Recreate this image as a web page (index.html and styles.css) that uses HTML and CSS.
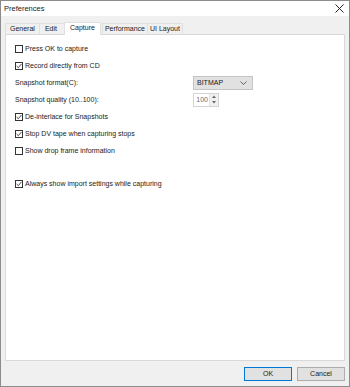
FILE: index.html
```html
<!DOCTYPE html>
<html lang="en">
<head>
    <meta charset="UTF-8">
    <title>Preferences</title>
    <link rel="stylesheet" href="styles.css">
</head>
<body>
    <div class="window">
        <div class="titlebar">
            <span class="title">Preferences</span>
            <svg class="close" width="9" height="9" viewBox="0 0 9 9">
                <path d="M0.5 0.5 L8.5 8.5 M8.5 0.5 L0.5 8.5" stroke="#222" stroke-width="1"/>
            </svg>
        </div>

        <div class="tabs">
            <span class="tab">General</span>
            <span class="tab wide">Edit</span>
            <span class="tab active">Capture</span>
            <span class="tab narrow">Performance</span>
            <span class="tab narrow">UI Layout</span>
        </div>

        <div class="panel">
            <label class="row"><span class="box"></span>Press OK to capture</label>
            <label class="row"><span class="box checked"></span>Record directly from CD</label>
            <div class="row">
                <span class="label">Snapshot format(C):</span>
                <span class="select">BITMAP
                    <svg width="7" height="4" viewBox="0 0 7 4"><path d="M0.5 0.5 L3.5 3.5 L6.5 0.5" fill="none" stroke="#555" stroke-width="0.9"/></svg>
                </span>
            </div>
            <div class="row">
                <span class="label">Snapshot quality (10..100):</span>
                <span class="spin">
                    <span class="spin-value">100</span>
                    <span class="spin-arrows">
                        <svg width="4" height="3" viewBox="0 0 4 3"><path d="M0 3 L2 0.5 L4 3 Z" fill="#666"/></svg>
                        <svg width="4" height="3" viewBox="0 0 4 3"><path d="M0 0 L2 2.5 L4 0 Z" fill="#666"/></svg>
                    </span>
                </span>
            </div>
            <label class="row"><span class="box checked"></span>De-interlace for Snapshots</label>
            <label class="row"><span class="box checked"></span>Stop DV tape when capturing stops</label>
            <label class="row"><span class="box"></span>Show drop frame information</label>
            <div class="row spacer"></div>
            <label class="row"><span class="box checked"></span>Always show import settings while capturing</label>
        </div>

        <div class="footer">
            <button class="btn default">OK</button>
            <button class="btn">Cancel</button>
        </div>
    </div>
</body>
</html>
```

FILE: styles.css
```css
body {
    margin: 0;
    font-family: "Liberation Sans", Arial, sans-serif;
    font-size: 7px;
    color: #1a1a1a;
}
.window {
    width: 350px;
    height: 387px;
    box-sizing: border-box;
    border: 1px solid #8c8c8c;
    background: #f0f0f0;
    display: flex;
    flex-direction: column;
}
.titlebar {
    height: 15px;
    background: #fff;
    display: flex;
    align-items: center;
    justify-content: space-between;
    padding: 0 5px 0 3px;
}
.title {
    font-size: 7.5px;
}
.tabs {
    display: flex;
    align-items: flex-end;
    height: 18px;
    margin: 0 4px;
}
.tab {
    height: 10px;
    line-height: 10px;
    padding: 0 4px;
    border: 1px solid #e0e0e0;
    border-bottom: none;
    margin-right: -1px;
    background: #f0f0f0;
}
.tab.wide {
    padding: 0 9px 0 5px;
}
.tab.narrow {
    padding: 0 2px;
}
.tab.active {
    height: 12px;
    line-height: 10px;
    background: #fff;
    margin: 0 1px -1px -2px;
    padding: 0 5px;
    position: relative;
    z-index: 1;
}
.panel {
    flex: 1;
    margin: 0 4px;
    background: #fff;
    border: 1px solid #d9d9d9;
    padding: 5px 0 0 9px;
}
.row {
    display: flex;
    align-items: center;
    height: 17px;
}
.row.spacer {
    height: 16px;
}
.box {
    width: 8px;
    height: 8px;
    box-sizing: border-box;
    border: 1px solid #333;
    margin-right: 2px;
    background: #fff;
}
.box.checked {
    background: #fff url("data:image/svg+xml;utf8,<svg xmlns='http://www.w3.org/2000/svg' width='6' height='6' viewBox='0 0 6 6'><path d='M0.6 3 L2.3 4.7 L5.4 1' fill='none' stroke='%23333' stroke-width='0.9'/></svg>") center no-repeat;
}
.label {
    width: 178px;
}
.select {
    width: 60px;
    height: 14px;
    box-sizing: border-box;
    border: 1px solid #c4c4c4;
    background: #e1e1e1;
    display: flex;
    align-items: center;
    justify-content: space-between;
    padding: 0 5px 0 3px;
}
.spin {
    width: 26px;
    height: 14px;
    box-sizing: border-box;
    border: 1px solid #d4d4d4;
    display: flex;
    align-items: center;
}
.spin-value {
    flex: 1;
    color: #6d6d6d;
    text-align: right;
    padding-right: 1px;
}
.spin-arrows {
    width: 8px;
    height: 12px;
    border-left: 1px solid #e0e0e0;
    background: #f0f0f0;
    display: flex;
    flex-direction: column;
    align-items: center;
    justify-content: space-around;
}
.footer {
    height: 25px;
    display: flex;
    justify-content: flex-end;
    align-items: center;
    gap: 5px;
    padding-right: 4px;
}
.btn {
    width: 48px;
    height: 14px;
    padding: 0;
    font-family: inherit;
    font-size: 7px;
    color: #1a1a1a;
    background: #e1e1e1;
    border: 1px solid #adadad;
}
.btn.default {
    border-color: #0078d7;
}
```
